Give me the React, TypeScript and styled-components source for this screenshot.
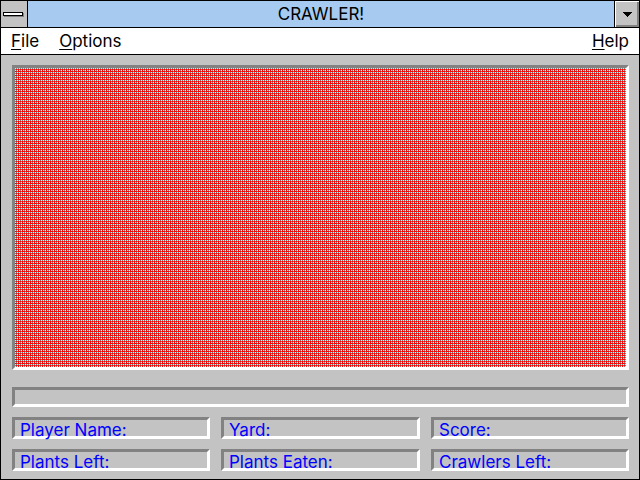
import React from "react";
import styled, { createGlobalStyle } from "styled-components";

const Global = createGlobalStyle`
  * { box-sizing: border-box; }
  body { margin: 0; background: #c3c3c3; }
  button { font: inherit; color: inherit; border: 0; border-radius: 0; padding: 0; margin: 0; background: none; }
`;

const Window = styled.main`
  min-height: 100vh;
  display: flex;
  flex-direction: column;
  border: 1px solid #000;
  background: #c3c3c3;
  color: #000;
  font: 17px/20px Inter, "Noto Sans", sans-serif;
`;

const TitleBar = styled.header`
  display: flex;
  height: 27px;
  border-bottom: 1px solid #000;
  background: #a6caf0;
`;

const Title = styled.h1`
  flex: 1;
  margin: 0;
  font-size: 17px;
  font-weight: 400;
  line-height: 26px;
  text-align: center;
`;

const SystemButton = styled.button`
  width: 27px;
  display: grid;
  place-items: center;
  && { background: #c3c3c3; border-right: 1px solid #000; padding-right: 1px; }
`;

const MinimizeButton = styled.button`
  width: 25px;
  display: grid;
  place-items: center;
  && {
    background: #c3c3c3;
    border-left: 1px solid #000;
    box-shadow: inset 1px 1px #fff, inset -2px -2px #828282;
  }
`;

const MenuBar = styled.nav`
  display: flex;
  gap: 20px;
  height: 27px;
  padding: 0 10px;
  background: #fff;
  border-bottom: 1px solid #000;
`;

const MenuItem = styled.button<{ $end?: boolean }>`
  && { margin-left: ${(p) => (p.$end ? "auto" : "0")}; line-height: 24px; }
`;

const Key = styled.span`
  text-decoration: underline;
  text-decoration-thickness: 1px;
  text-decoration-skip-ink: none;
  text-underline-offset: 2px;
`;

const Board = styled.div`
  flex: 1;
  display: flex;
  flex-direction: column;
  padding: 10px 10px 8px 11px;
`;

const Sunken = styled.div`
  border: 3px solid;
  border-color: #828282 #fff #fff #828282;
`;

const Yard = styled(Sunken)`
  flex: 1;
  display: flex;
  flex-direction: column;
`;

const Ground = styled.svg`
  display: block;
  width: 100%;
  flex: 1 1 0;
  min-height: 0;
`;

const Message = styled(Sunken)`
  height: 20px;
  margin: 17px 0 10px;
`;

const Stats = styled.section`
  display: grid;
  grid-template-columns: 198fr 199fr 198fr;
  gap: 10px 11px;
`;

const Stat = styled(Sunken)`
  height: 22px;
  padding-left: 5px;
  line-height: 20px;
  color: #00f;
  white-space: nowrap;
`;

const stats = ["Player Name:", "Yard:", "Score:", "Plants Left:", "Plants Eaten:", "Crawlers Left:"];

const dither = ["YGYG", "GRGR", "YGYR", "RRGR"];
const inks: Record<string, string> = { Y: "#ff0", G: "#828282", R: "#f00" };

export default function App() {
  return (
    <Window>
      <Global />
      <TitleBar>
        <SystemButton aria-label="System menu">
          <svg width="21" height="5" shapeRendering="crispEdges">
            <path fill="#828282" d="M1 1h20v4H1z" />
            <path d="M0 0h20v4H0z" />
            <path fill="#fff" d="M1 1h18v2H1z" />
          </svg>
        </SystemButton>
        <Title>CRAWLER!</Title>
        <MinimizeButton aria-label="Minimize">
          <svg width="9" height="5" shapeRendering="crispEdges">
            <path d="M0 0h9v1H8v1H7v1H6v1H5v1H4V4H3V3H2V2H1V1H0z" />
          </svg>
        </MinimizeButton>
      </TitleBar>
      <MenuBar>
        <MenuItem><Key>F</Key>ile</MenuItem>
        <MenuItem><Key>O</Key>ptions</MenuItem>
        <MenuItem $end><Key>H</Key>elp</MenuItem>
      </MenuBar>
      <Board>
        <Yard>
          <Ground role="img" aria-label="Yard">
            <defs>
              <pattern id="dither" width="4" height="4" patternUnits="userSpaceOnUse">
                <g shapeRendering="crispEdges">
                  {dither.map((row, y) =>
                    row.split("").map((ink, x) => (
                      <rect key={`${x},${y}`} x={x} y={y} width="1" height="1" fill={inks[ink]} />
                    ))
                  )}
                </g>
              </pattern>
            </defs>
            <rect width="100%" height="100%" fill="url(#dither)" />
          </Ground>
        </Yard>
        <Message />
        <Stats>
          {stats.map((label) => <Stat key={label}>{label}</Stat>)}
        </Stats>
      </Board>
    </Window>
  );
}
